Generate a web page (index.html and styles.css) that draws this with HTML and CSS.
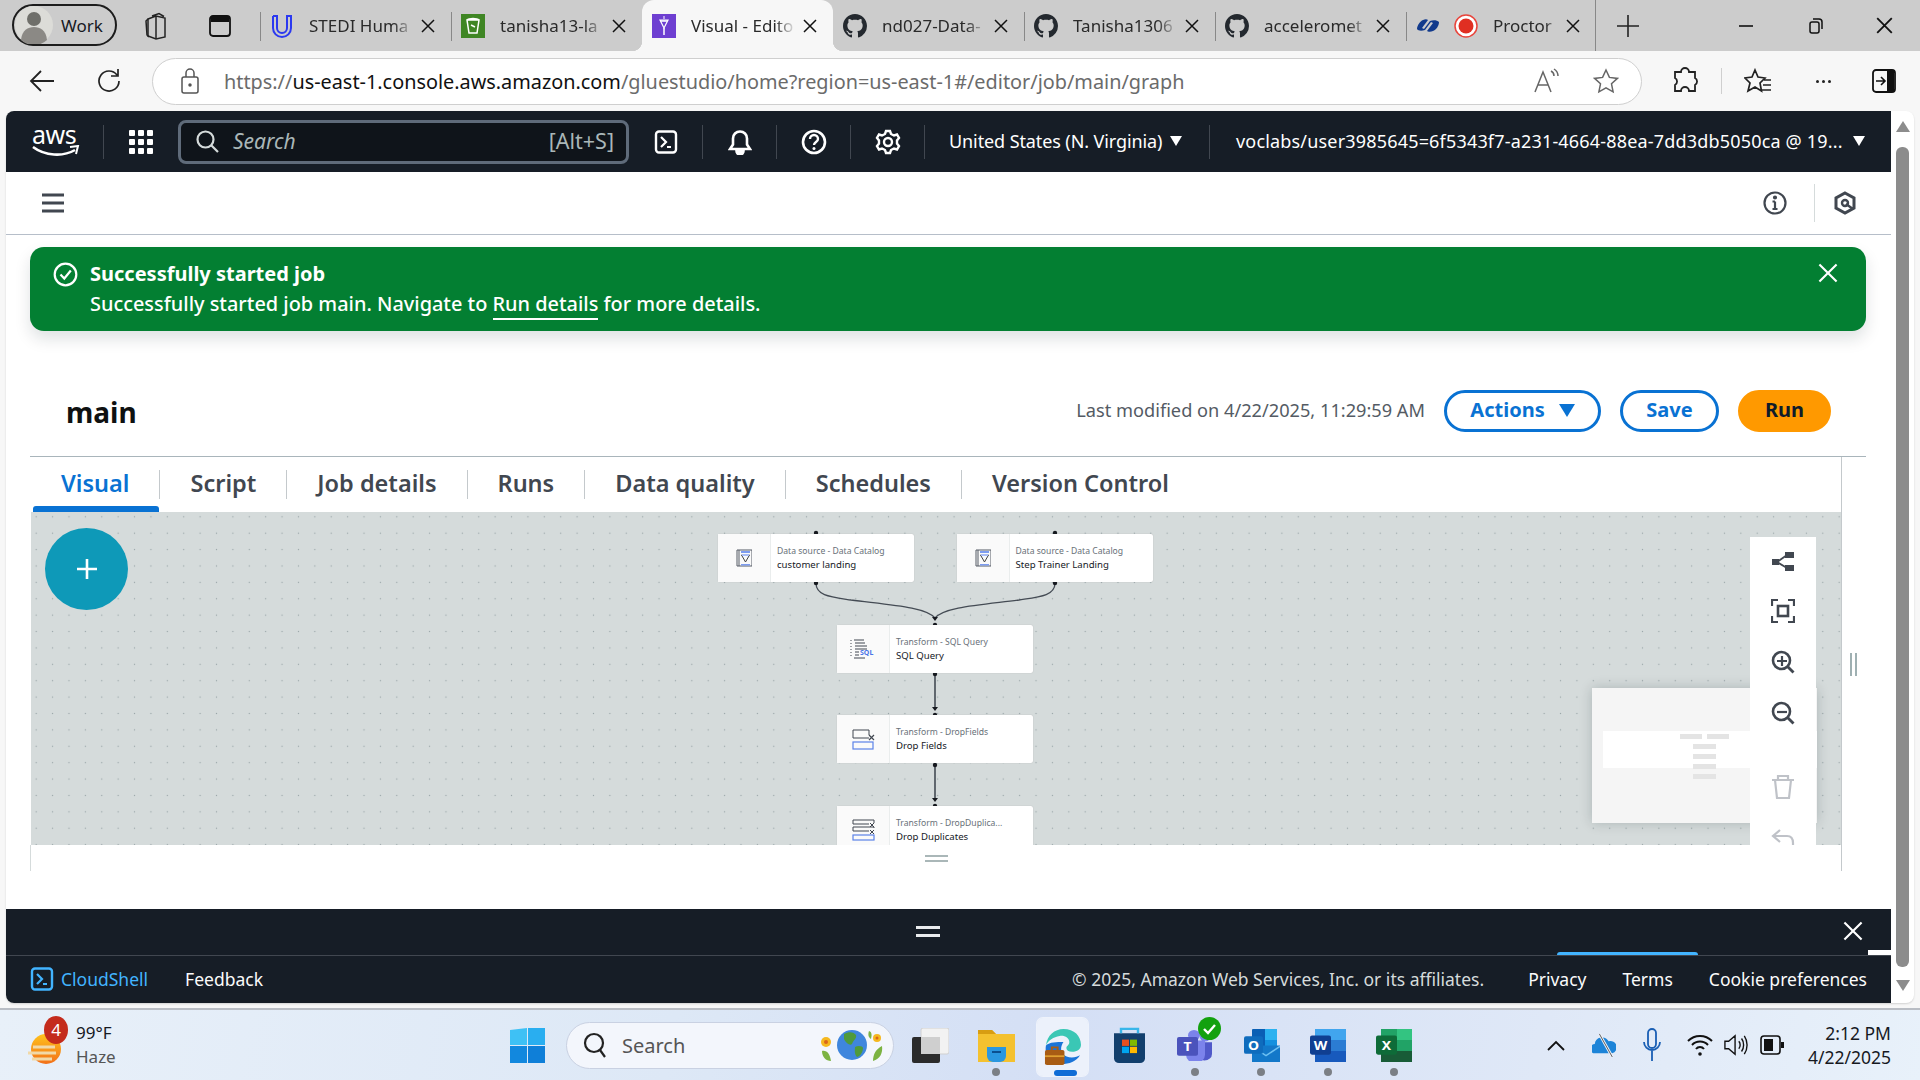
FILE: index.html
```html
<!DOCTYPE html>
<html lang="en">
<head>
    <meta charset="UTF-8">
    <title>Visual - Editor</title>
    <link rel="stylesheet" href="styles.css">
</head>
<body>
    <svg class="defs" width="0" height="0">
        <symbol id="x" viewBox="0 0 14 14"><path d="M1 1l12 12M13 1L1 13" fill="none" stroke="currentColor" stroke-width="1.5"/></symbol>
        <symbol id="github" viewBox="0 0 16 16"><path fill="#24292f" d="M8 0C3.58 0 0 3.58 0 8c0 3.54 2.29 6.53 5.47 7.59.4.07.55-.17.55-.38 0-.19-.01-.82-.01-1.49-2.01.37-2.53-.49-2.69-.94-.09-.23-.48-.94-.82-1.13-.28-.15-.68-.52-.01-.53.63-.01 1.08.58 1.23.82.72 1.21 1.87.87 2.33.66.07-.52.28-.87.51-1.07-1.78-.2-3.64-.89-3.64-3.95 0-.87.31-1.59.82-2.15-.08-.2-.36-1.02.08-2.12 0 0 .67-.21 2.2.82.64-.18 1.32-.27 2-.27.68 0 1.36.09 2 .27 1.53-1.04 2.2-.82 2.2-.82.44 1.1.16 1.92.08 2.12.51.56.82 1.27.82 2.15 0 3.07-1.87 3.75-3.65 3.95.29.25.54.73.54 1.48 0 1.07-.01 1.93-.01 2.2 0 .21.15.46.55.38A8.013 8.013 0 0016 8c0-4.42-3.58-8-8-8z"/></symbol>
        <symbol id="shell" viewBox="0 0 24 24"><rect x="2" y="1.5" width="20" height="21" rx="3" fill="none" stroke="currentColor" stroke-width="2.4"/><path d="M7 7l5 5-5 5M13 17h4" fill="none" stroke="currentColor" stroke-width="2.2"/></symbol>
        <symbol id="catalog" viewBox="0 0 16 18"><path d="M3 1H1v16h2M3 1v16M3 1h13v16H3" fill="none" stroke="#545b64" stroke-width="1"/><path d="M5 2h9v2H5zM5 15h9v1.5H5z" fill="#7d9cf0"/><path d="M5.500 6h8l-4 7z" fill="none" stroke="#444" stroke-width="1"/><path d="M6 5h7v2H6z" fill="#a9bdf5"/></symbol>
        <symbol id="zoomglass" viewBox="0 0 24 24"><circle cx="10.500" cy="10.500" r="8.500" fill="none" stroke="#414750" stroke-width="2.600"/><path d="M16.500 16.500l6 6" stroke="#414750" stroke-width="2.800"/></symbol>
    </svg>

    <div class="tabstrip">
        <div class="profile">
            <svg width="38" height="38" viewBox="0 0 38 38"><circle cx="19" cy="19" r="19" fill="#dcdcd8"/><circle cx="19" cy="13" r="7" fill="#6f6f6a"/><path d="M6 34c1-10 7-13 13-13s12 3 13 13a19 19 0 01-26 0z" fill="#8b8985"/></svg>
            <span>Work</span>
        </div>
        <div class="strip-btn">
            <svg width="26" height="28" viewBox="0 0 26 28" fill="none" stroke="#222" stroke-width="1.500"><path d="M8 4l7-2.500 5 3M4 7l8-3 9 2 0 19-9 2-8-3z"/><path d="M12 4v23"/><path d="M4 7L2 9l1 14 2 2"/></svg>
        </div>
        <div class="strip-btn strip-btn-list">
            <svg width="24" height="24" viewBox="0 0 24 24"><rect x="2" y="2" width="20" height="20" rx="3" fill="none" stroke="#111" stroke-width="1.800"/><path d="M3 3h18v5H3z" fill="#111"/></svg>
        </div>
        <div class="tab">
            <svg class="tab-icon" viewBox="0 0 24 24"><path d="M3 2v12a9 9 0 0018 0V2h-4v12a5 5 0 01-5 5" fill="none" stroke="#2b39f0" stroke-width="2"/><path d="M3 2h4v12a5 5 0 005 5" fill="none" stroke="#2b39f0" stroke-width="2"/></svg>
            <span class="tab-title">STEDI Huma</span>
            <svg class="tab-x"><use href="#x"/></svg>
        </div>
        <div class="tab">
            <svg class="tab-icon" viewBox="0 0 24 24"><rect width="24" height="24" fill="#3f8624"/><path d="M6 6h12l-2 13H8zM6 6c2-2 10-2 12 0" fill="none" stroke="#fff" stroke-width="1.500"/><path d="M10 11l4 2" stroke="#fff" stroke-width="1.500"/></svg>
            <span class="tab-title">tanisha13-la</span>
            <svg class="tab-x"><use href="#x"/></svg>
        </div>
        <div class="tab tab-active">
            <svg class="tab-icon" viewBox="0 0 24 24"><rect width="24" height="24" fill="#6e3fd1"/><path d="M8 6h8l-4 8z" fill="none" stroke="#fff" stroke-width="1.200"/><path d="M12 14v7M9 7h6" stroke="#fff" stroke-width="1.500"/><path d="M12 2v3" stroke="#fff"/></svg>
            <span class="tab-title">Visual - Edito</span>
            <svg class="tab-x"><use href="#x"/></svg>
        </div>
        <div class="tab">
            <svg class="tab-icon"><use href="#github"/></svg>
            <span class="tab-title">nd027-Data-</span>
            <svg class="tab-x"><use href="#x"/></svg>
        </div>
        <div class="tab">
            <svg class="tab-icon"><use href="#github"/></svg>
            <span class="tab-title">Tanisha1306</span>
            <svg class="tab-x"><use href="#x"/></svg>
        </div>
        <div class="tab">
            <svg class="tab-icon"><use href="#github"/></svg>
            <span class="tab-title">acceleromet</span>
            <svg class="tab-x"><use href="#x"/></svg>
        </div>
        <div class="tab tab-proctor">
            <svg class="tab-icon" viewBox="0 0 24 24"><path d="M1 15c0-3 3-8 6-9 2-1 4-1 5 0l-6 8 2 1 6-8c3-1 7-1 9 1 0 4-3 8-6 9-2 1-5 1-6 0l6-8-2-1-6 8c-3 1-7 1-8-1z" fill="#123a8c"/></svg>
            <svg class="tab-icon" viewBox="0 0 24 24"><circle cx="12" cy="12" r="11" fill="#fff" stroke="#e8453c" stroke-width="1.500"/><circle cx="12" cy="12" r="7.500" fill="#e02f22"/></svg>
            <span class="tab-title">Proctor</span>
            <svg class="tab-x"><use href="#x"/></svg>
        </div>
        <div class="new-tab">
            <svg width="24" height="24" viewBox="0 0 24 24"><path d="M12 1v22M1 12h22" stroke="#222" stroke-width="1.600"/></svg>
        </div>
        <div class="window-btns">
            <svg width="16" height="16" viewBox="0 0 16 16"><path d="M1 8h14" stroke="#111" stroke-width="1.600"/></svg>
            <svg width="16" height="18" viewBox="0 0 16 18" fill="none" stroke="#111" stroke-width="1.500"><rect x="2" y="5" width="9" height="11" rx="2"/><path d="M5 2h6a3 3 0 013 3v7"/></svg>
            <svg class="window-x"><use href="#x"/></svg>
        </div>
    </div>

    <div class="toolbar">
        <svg class="tool-back" width="26" height="24" viewBox="0 0 26 24" fill="none" stroke="#222" stroke-width="1.800"><path d="M25 12H2M12 2L2 12l10 10"/></svg>
        <svg class="tool-reload" width="24" height="26" viewBox="0 0 24 26" fill="none" stroke="#222" stroke-width="1.700"><path d="M20 7a10 10 0 102 6M21 1v7h-7"/></svg>
        <div class="address">
            <svg class="lock" width="18" height="26" viewBox="0 0 18 26" fill="none" stroke="#555" stroke-width="1.500"><rect x="1" y="9" width="16" height="16" rx="2"/><path d="M5 9V5a4 4 0 018 0v4"/><circle cx="9" cy="17" r="1" fill="#555"/></svg>
            <span class="url"><span class="url-dim">https://</span>us-east-1.console.aws.amazon.com<span class="url-dim">/gluestudio/home?region=us-east-1#/editor/job/main/graph</span></span>
            <svg class="read" width="28" height="26" viewBox="0 0 28 26" fill="none" stroke="#666" stroke-width="1.500"><path d="M2 24L10 4l8 20M5 17h10M18 3c2 1 3 3 3 5M21 1c3 2 4 4 4 7"/></svg>
            <svg class="star" width="26" height="26" viewBox="0 0 26 26" fill="none" stroke="#666" stroke-width="1.500"><path d="M13 2l3.400 7.400 8 1-5.900 5.400 1.600 8L13 19.900 5.900 23.800l1.600-8L1.600 10.400l8-1z"/></svg>
        </div>
        <svg class="tool-ext" width="26" height="28" viewBox="0 0 26 28" fill="none" stroke="#222" stroke-width="1.800"><path d="M9 5a4 4 0 018 0h6v6a4 4 0 010 7v6h-6a4 4 0 00-8 0H3v-6a4 4 0 000-7V5z"/></svg>
        <div class="tool-sep"></div>
        <svg class="tool-fav" width="28" height="26" viewBox="0 0 28 26" fill="none" stroke="#222" stroke-width="1.700"><path d="M11 2l3 7 7 1-5 5 1.500 8L11 19l-7 4 2-8-5-5 7-1zM20 12h7M19 17h8M18 22h9"/></svg>
        <div class="tool-dots"><i></i><i></i><i></i></div>
        <svg class="tool-side" width="24" height="24" viewBox="0 0 24 24"><rect x="1" y="1" width="22" height="22" rx="3" fill="none" stroke="#111" stroke-width="1.800"/><path d="M15 2h7v20h-7z" fill="#111"/><path d="M4 12h8M9 8l4 4-4 4" fill="none" stroke="#111" stroke-width="1.600"/></svg>
    </div>

    <div class="viewport">
        <div class="page">
            <div class="console">
                <header class="topnav">
                    <div class="nav-logo">
                        <div class="aws-logo">
                            <span>aws</span>
                            <svg width="48" height="13" viewBox="0 0 48 13"><path d="M1 2c12 9 30 10 42 3" fill="none" stroke="#fff" stroke-width="2.600"/><path d="M38 2l8-1-2 8" fill="none" stroke="#fff" stroke-width="2"/></svg>
                        </div>
                    </div>
                    <div class="nav-grid">
                        <svg width="24" height="24" viewBox="0 0 24 24" fill="#fff"><rect width="6" height="6" rx="1"/><rect x="9" width="6" height="6" rx="1"/><rect x="18" width="6" height="6" rx="1"/><rect y="9" width="6" height="6" rx="1"/><rect x="9" y="9" width="6" height="6" rx="1"/><rect x="18" y="9" width="6" height="6" rx="1"/><rect y="18" width="6" height="6" rx="1"/><rect x="9" y="18" width="6" height="6" rx="1"/><rect x="18" y="18" width="6" height="6" rx="1"/></svg>
                    </div>
                    <div class="nav-search">
                        <svg width="23" height="23" viewBox="0 0 23 23" fill="none" stroke="#d5dbdb" stroke-width="2.200"><circle cx="9.500" cy="9.500" r="8"/><path d="M15 15l7 7"/></svg>
                        <em>Search</em>
                        <span>[Alt+S]</span>
                    </div>
                    <div class="nav-cell nav-shell"><svg width="24" height="26"><use href="#shell"/></svg></div>
                    <div class="nav-cell">
                        <svg width="24" height="26" viewBox="0 0 24 26" fill="none" stroke="#fff" stroke-width="2.600"><path d="M12 2.500c-4 0-7 3-7 7v6l-3 4.500h20l-3-4.500v-6c0-4-3-7-7-7z"/><path d="M8.500 22a3.500 3.500 0 007 0z" fill="#fff"/></svg>
                    </div>
                    <div class="nav-cell">
                        <svg width="26" height="26" viewBox="0 0 26 26"><circle cx="13" cy="13" r="11" fill="none" stroke="#fff" stroke-width="2.600"/><path d="M9 10a4 4 0 118 0c0 3-4 3-4 6" fill="none" stroke="#fff" stroke-width="2.400"/><circle cx="13" cy="19.500" r="1.500" fill="#fff"/></svg>
                    </div>
                    <div class="nav-cell">
                        <svg width="26" height="26" viewBox="0 0 26 26" fill="none" stroke="#fff" stroke-width="2.400"><circle cx="13" cy="13" r="4"/><path d="M11 2h4l1 3 3 1.500 3-1 2 3.500-2 2.500v3l2 2.500-2 3.500-3-1L16 21l-1 3h-4l-1-3-3-1.500-3 1-2-3.500 2-2.500v-3l-2-2.500 2-3.500 3 1L10 5z"/></svg>
                    </div>
                    <div class="nav-region"><span>United States (N. Virginia)</span><b class="nav-caret"></b></div>
                    <div class="nav-user"><span>voclabs/user3985645=6f5343f7-a231-4664-88ea-7dd3db5050ca @ 19...</span><b class="nav-caret"></b></div>
                </header>

                <div class="subnav">
                    <svg width="22" height="20" viewBox="0 0 22 20"><path d="M0 2h22M0 10h22M0 18h22" stroke="#414750" stroke-width="3"/></svg>
                    <div class="subnav-right">
                        <div class="subnav-cell subnav-info">
                            <svg width="24" height="24" viewBox="0 0 24 24" fill="none" stroke="#414750" stroke-width="2.200"><circle cx="12" cy="12" r="10.500"/><path d="M12 10.500V18M9.500 18h5M9.500 10.500H12"/><circle cx="12" cy="6.500" r="1" fill="#414750"/></svg>
                        </div>
                        <div class="subnav-cell">
                            <svg width="22" height="24" viewBox="0 0 22 24" fill="none" stroke="#414750" stroke-width="3"><path d="M11 2l9 5v10l-9 5-9-5V7z"/><circle cx="11" cy="12" r="3" stroke-width="2.400"/><path d="M12 13l7 5" stroke-width="2.400"/></svg>
                        </div>
                    </div>
                </div>

                <div class="flash">
                    <svg class="flash-icon" width="25" height="25" viewBox="0 0 25 25" fill="none" stroke="#fff" stroke-width="2.200"><circle cx="12.500" cy="12.500" r="10.800"/><path d="M7.500 12.500l3.800 4 6.500-8"/></svg>
                    <div class="flash-text">
                        <div class="flash-title">Successfully started job</div>
                        <div>Successfully started job main. Navigate to <a class="flash-link">Run details</a> for more details.</div>
                    </div>
                    <svg class="flash-x"><use href="#x"/></svg>
                </div>

                <section class="job">
                    <div class="job-head">
                        <h1>main</h1>
                        <span class="modified">Last modified on 4/22/2025, 11:29:59 AM</span>
                        <button class="btn btn-actions">Actions<b class="btn-caret"></b></button>
                        <button class="btn btn-save">Save</button>
                        <button class="btn btn-run">Run</button>
                    </div>
                    <div class="editor">
                        <div class="editor-main">
                            <div class="tabs">
                                <div class="jtab jtab-active">Visual</div>
                                <div class="jtab">Script</div>
                                <div class="jtab">Job details</div>
                                <div class="jtab">Runs</div>
                                <div class="jtab">Data quality</div>
                                <div class="jtab">Schedules</div>
                                <div class="jtab jtab-last">Version Control</div>
                            </div>
                            <div class="canvas">
                                <svg class="wires" width="1810" height="333" viewBox="0 0 1810 333">
                                    <g fill="none" stroke="#444b54" stroke-width="1.300">
                                        <path d="M785 71C785 84 800 85 820 88C860 93 895 95 904 106"/>
                                        <path d="M1024 71C1024 84 1008 85 988 88C948 93 913 95 904 106"/>
                                        <path d="M904 162V197M904 253V288" stroke-width="1.600"/>
                                    </g>
                                    <g fill="#16191f">
                                        <circle cx="785" cy="21" r="2.200"/><circle cx="1024" cy="21" r="2.200"/>
                                        <circle cx="785" cy="71" r="2.200"/><circle cx="1024" cy="71" r="2.200"/>
                                        <circle cx="904" cy="162" r="2.200"/><circle cx="904" cy="253" r="2.200"/>
                                        <circle cx="904" cy="113" r="2.200"/><circle cx="904" cy="203" r="2.200"/><circle cx="904" cy="294" r="2.200"/>
                                        <path d="M901 105h6l-3 4zM901 195h6l-3 4zM901 286h6l-3 4z"/>
                                    </g>
                                </svg>

                                <div class="node node-a">
                                    <div class="node-icon"><svg width="16" height="18"><use href="#catalog"/></svg></div>
                                    <div class="node-text"><small>Data source - Data Catalog</small><span>customer landing</span></div>
                                </div>
                                <div class="node node-b">
                                    <div class="node-icon"><svg width="16" height="18"><use href="#catalog"/></svg></div>
                                    <div class="node-text"><small>Data source - Data Catalog</small><span>Step Trainer Landing</span></div>
                                </div>
                                <div class="node node-c">
                                    <div class="node-icon">
                                        <svg width="26" height="20" viewBox="0 0 26 20"><path d="M4 1h10M5 4h10M5 7h12M5 10h12M5 13h4M5 16h4M4 19h11" stroke="#414750" stroke-width="1" fill="none"/><path d="M1 1v18" stroke="#414750" stroke-width="1" stroke-dasharray="1 2"/><text x="10" y="16" class="sql-text">SQL</text></svg>
                                    </div>
                                    <div class="node-text"><small>Transform - SQL Query</small><span>SQL Query</span></div>
                                </div>
                                <div class="node node-d">
                                    <div class="node-icon">
                                        <svg width="23" height="21" viewBox="0 0 23 21" fill="none"><path d="M17 9H1V1h16v5" stroke="#414750"/><path d="M17 6l5 5M22 6l-5 5" stroke="#414750" stroke-width="1.200"/><rect x="1" y="13" width="20" height="7" stroke="#5b82e8" stroke-width="1.200"/></svg>
                                    </div>
                                    <div class="node-text"><small>Transform - DropFields</small><span>Drop Fields</span></div>
                                </div>
                                <div class="node node-e">
                                    <div class="node-icon">
                                        <svg width="23" height="22" viewBox="0 0 23 22" fill="none"><path d="M1 1h21v3M1 1v4h16M1 8h21v1M1 8v4h16" stroke="#414750"/><path d="M18 4l4 4M22 4l-4 4M18 11l4 4M22 11l-4 4" stroke="#414750"/><rect x="1" y="16" width="21" height="5" stroke="#5b82e8" stroke-width="1.200"/></svg>
                                    </div>
                                    <div class="node-text"><small>Transform - DropDuplica...</small><span>Drop Duplicates</span></div>
                                </div>

                                <button class="add-node">
                                    <svg width="24" height="24" viewBox="0 0 24 24"><path d="M12 2v20M2 12h20" stroke="#fff" stroke-width="2.600"/></svg>
                                </button>

                                <div class="minimap">
                                    <div class="minimap-view"></div>
                                    <i class="mm mm-a"></i><i class="mm mm-b"></i><i class="mm mm-c"></i><i class="mm mm-d"></i><i class="mm mm-e"></i><i class="mm mm-f"></i>
                                </div>

                                <div class="tools">
                                    <svg width="22" height="20" viewBox="0 0 22 20" fill="#414750"><path d="M0 7h7v6H0zM13 0h9v6h-9zM13 13h9v6h-9z"/><path d="M5 10l10-7M5 10l10 6" stroke="#414750" stroke-width="1.800"/></svg>
                                    <svg width="24" height="24" viewBox="0 0 24 24" fill="none" stroke="#414750" stroke-width="2.200"><path d="M1 7V1h6M17 1h6v6M23 17v6h-6M7 23H1v-6"/><rect x="7" y="7" width="10" height="10" stroke-width="2.600"/></svg>
                                    <div class="tool-zoom">
                                        <svg width="24" height="24"><use href="#zoomglass"/></svg>
                                        <svg class="tool-zoom-mark" width="12" height="12" viewBox="0 0 12 12"><path d="M1 6h10M6 1v10" stroke="#414750" stroke-width="2.200"/></svg>
                                    </div>
                                    <div class="tool-zoom">
                                        <svg width="24" height="24"><use href="#zoomglass"/></svg>
                                        <svg class="tool-zoom-mark" width="12" height="12" viewBox="0 0 12 12"><path d="M1 6h10" stroke="#414750" stroke-width="2.200"/></svg>
                                    </div>
                                    <svg class="tool-trash" width="22" height="24" viewBox="0 0 22 24" fill="none" stroke="#bfc2c8" stroke-width="2.200"><path d="M0 5h22M6 5V1h10v4M3 5l2 18h12l2-18"/></svg>
                                    <svg class="tool-undo" width="24" height="20" viewBox="0 0 24 20" fill="none" stroke="#bfc2c8" stroke-width="2.200"><path d="M9 1L2 7l7 6M2 7h14c4 0 6 3 6 7v5"/></svg>
                                </div>
                            </div>
                            <div class="resize-y"><i></i></div>
                        </div>
                        <div class="resize-x"><i></i></div>
                    </div>
                </section>

                <div class="shell-panel">
                    <div class="shell-bar">
                        <div class="shell-grip"></div>
                        <svg class="shell-x"><use href="#x"/></svg>
                        <div class="shell-arc"></div>
                        <div class="shell-tick"></div>
                    </div>
                    <footer class="footer">
                        <svg class="footer-shell" width="24" height="24"><use href="#shell"/></svg>
                        <span class="footer-cs">CloudShell</span>
                        <span class="footer-fb">Feedback</span>
                        <span class="footer-copy">© 2025, Amazon Web Services, Inc. or its affiliates.</span>
                        <span class="footer-link">Privacy</span>
                        <span class="footer-link">Terms</span>
                        <span class="footer-link">Cookie preferences</span>
                    </footer>
                </div>
            </div>
            <div class="scrollbar">
                <b class="sb-up"></b>
                <div class="sb-thumb"></div>
                <b class="sb-down"></b>
            </div>
        </div>
    </div>

    <div class="taskbar">
        <div class="weather">
            <div class="weather-icon">
                <svg width="34" height="42" viewBox="0 0 34 42"><defs><linearGradient id="sun" x1="0" y1="0" x2="0" y2="1"><stop offset="0" stop-color="#ffc21c"/><stop offset="1" stop-color="#f2701a"/></linearGradient></defs><circle cx="19" cy="23" r="15" fill="url(#sun)"/><path d="M6 21h22M1 27h28M5 33h20" stroke="#f1d9a8" stroke-width="3"/></svg>
                <span class="weather-badge">4</span>
            </div>
            <div class="weather-text"><div>99°F</div><div class="weather-sub">Haze</div></div>
        </div>
        <svg class="start" width="35" height="35" viewBox="0 0 35 35"><path d="M0 2l17-2v17H0z" fill="#3ec1f5"/><path d="M18 0l17 0v17H18z" fill="#29aef0"/><path d="M0 18h17v17H0z" fill="#1288de"/><path d="M18 18h17v17H18z" fill="#0f7fd8"/></svg>
        <div class="tb-search">
            <svg width="24" height="26" viewBox="0 0 24 26" fill="none" stroke="#222" stroke-width="2.200"><circle cx="11" cy="11" r="9"/><path d="M17 18l5 7"/></svg>
            <span>Search</span>
            <svg class="tb-globe" width="66" height="36" viewBox="0 0 66 36"><circle cx="33" cy="18" r="15" fill="#3f86dd"/><path d="M25 7c5-3 10-2 12 1 1 4-3 5-4 9-2 2-6-1-8-5zM36 20c3-2 8-1 8 1 0 5-4 9-6 9-3-3-2-7-2-10z" fill="#4f9a3c"/><circle cx="7" cy="15" r="5" fill="#f5b81f"/><circle cx="7" cy="15" r="2" fill="#d9661a"/><circle cx="58" cy="11" r="4" fill="#f5b81f"/><circle cx="58" cy="11" r="1.500" fill="#d9661a"/><path d="M3 24c5-1 8 3 9 10-5 0-9-4-9-10zM63 19c1 7-2 13-9 15 0-7 3-12 9-15zM50 4c3 1 3 4 2 8-3-2-3-5-2-8z" fill="#7cb342"/></svg>
        </div>
        <div class="app">
            <svg width="37" height="35" viewBox="0 0 37 35"><rect x="9" y="0" width="28" height="26" rx="2" fill="#f2f2f2" stroke="#d0d0d0"/><rect x="0" y="9" width="28" height="26" rx="2" fill="#2b2b2b"/><rect x="9" y="9" width="19" height="17" fill="#cfcfcf"/></svg>
        </div>
        <div class="app app-running">
            <svg width="37" height="33" viewBox="0 0 37 33"><path d="M0 1h14l4 4h19v28H0z" fill="#f4c12f"/><path d="M0 1h14l4 4H0z" fill="#d89d12"/><path d="M9 18h19v9a6 6 0 01-6 6h-7a6 6 0 01-6-6z" fill="#2a97e0"/><path d="M14 23h9" stroke="#0b4f8f" stroke-width="2"/></svg>
        </div>
        <div class="app app-active">
            <svg width="37" height="37" viewBox="0 0 38 42" preserveAspectRatio="none"><path d="M2 20C3 8 11 1 20 1c11 0 18 8 18 18 0 5-4 8-9 8-4 0-6-2-6-4 0-3 3-3 3-7 0-5-5-8-10-7C10 10 4 14 2 20z" fill="#3ac7b5"/><path d="M2 20c-2 12 6 20 16 21 8 0 15-3 19-10-4 3-14 4-18-2-2-4-2-8 1-13-7 0-14 0-18 4z" fill="#1a74d8"/><rect x="1" y="25" width="20" height="17" rx="2" fill="#a85c14"/><path d="M1 32h20" stroke="#e0a030" stroke-width="2"/><path d="M8 25v-3h6v3" fill="none" stroke="#a85c14" stroke-width="2"/></svg>
            <i class="app-bar"></i>
        </div>
        <div class="app">
            <svg width="35" height="36" viewBox="0 0 35 40" preserveAspectRatio="none"><path d="M2 7h31v28a5 5 0 01-5 5H7a5 5 0 01-5-5z" fill="#123f6d"/><path d="M9 7V2h17v5" fill="none" stroke="#38b6ea" stroke-width="2.400"/><rect x="10" y="14" width="7" height="7" fill="#e8501f"/><rect x="18" y="14" width="7" height="7" fill="#7fba00"/><rect x="10" y="22" width="7" height="7" fill="#00a4ef"/><rect x="18" y="22" width="7" height="7" fill="#ffb900"/></svg>
        </div>
        <div class="app app-running">
            <div class="teams">
                <svg width="36" height="32" viewBox="0 0 36 36" preserveAspectRatio="none"><circle cx="28" cy="9" r="5" fill="#7b83eb"/><path d="M20 15h15v13a7 7 0 01-15 0z" fill="#5059c9"/><circle cx="17" cy="7" r="6" fill="#7b83eb"/><path d="M9 13h19v16a9 9 0 01-19 0z" fill="#7b83eb"/><rect x="0" y="9" width="21" height="21" rx="2" fill="#4b53bc"/><text x="10.500" y="25" class="app-letter">T</text></svg>
                <svg class="teams-check" width="23" height="23" viewBox="0 0 23 23"><circle cx="11.500" cy="11.500" r="11.500" fill="#13a10e"/><path d="M6 12l4 4 7-8" fill="none" stroke="#fff" stroke-width="2.400"/></svg>
            </div>
        </div>
        <div class="app app-running">
            <svg width="36" height="33" viewBox="0 0 36 36" preserveAspectRatio="none"><rect x="8" y="0" width="25" height="24" rx="1" fill="#0a5fb4"/><rect x="21" y="0" width="12" height="12" fill="#2cb2f0"/><rect x="21" y="12" width="12" height="12" fill="#1490df"/><path d="M8 18h28v18H8z" fill="#1378c9"/><path d="M8 18l14 10 14-10v2L22 30 8 20z" fill="#6fc1f2"/><rect x="0" y="8" width="19" height="19" rx="2" fill="#0f6cbd"/><text x="9.500" y="23" class="app-letter">O</text></svg>
        </div>
        <div class="app app-running">
            <svg width="36" height="33" viewBox="0 0 36 36" preserveAspectRatio="none"><rect x="5" y="0" width="31" height="12" fill="#41a5ee"/><rect x="5" y="12" width="31" height="12" fill="#2b7cd3"/><rect x="5" y="24" width="31" height="12" fill="#185abd"/><rect x="0" y="7" width="21" height="21" rx="2" fill="#103f91"/><text x="10.500" y="23" class="app-letter">W</text></svg>
        </div>
        <div class="app app-running">
            <svg width="36" height="33" viewBox="0 0 36 36" preserveAspectRatio="none"><rect x="5" y="0" width="16" height="12" fill="#21a366"/><rect x="21" y="0" width="15" height="12" fill="#33c481"/><rect x="5" y="12" width="16" height="12" fill="#107c41"/><rect x="21" y="12" width="15" height="12" fill="#21a366"/><rect x="5" y="24" width="31" height="12" fill="#185c37"/><rect x="0" y="7" width="21" height="21" rx="2" fill="#0e6b38"/><text x="10.500" y="23" class="app-letter">X</text></svg>
        </div>
        <div class="tray">
            <svg width="18" height="11" viewBox="0 0 18 11"><path d="M1 10l8-8 8 8" fill="none" stroke="#111" stroke-width="1.800"/></svg>
            <svg class="tray-cloud" width="24" height="28" viewBox="0 0 26 30"><path d="M3 24a5 5 0 010-10 8 8 0 0115-3 6 6 0 014 13z" fill="#1d84d8"/><path d="M8 3l14 25" stroke="#eef2fa" stroke-width="3"/><path d="M8 3l14 25" stroke="#555" stroke-width="1"/></svg>
            <svg class="tray-mic" width="18" height="34" viewBox="0 0 18 34" fill="none" stroke="#1a5fb4" stroke-width="1.800"><rect x="5" y="1" width="8" height="19" rx="4"/><path d="M1 14a8 8 0 0016 0M9 23v10"/></svg>
            <svg class="tray-wifi" width="26" height="24" viewBox="0 0 26 24" fill="none" stroke="#111" stroke-width="2"><path d="M1 8a17 17 0 0124 0M5 12a11 11 0 0116 0M9 16a5 5 0 018 0"/><circle cx="13" cy="21" r="1.800" fill="#111" stroke="none"/></svg>
            <svg class="tray-vol" width="24" height="24" viewBox="0 0 26 26" fill="none" stroke="#111" stroke-width="1.500"><path d="M1 9h4l7-6v20l-7-6H1zM16 9c2 2 2 6 0 8M19 6c3 4 3 10 0 14M22 3c4 6 4 14 0 20"/></svg>
            <svg class="tray-batt" width="24" height="20" viewBox="0 0 24 20"><rect x="1" y="1" width="19" height="18" rx="3" fill="none" stroke="#111" stroke-width="1.600"/><rect x="4" y="4" width="9" height="12" fill="#111"/><rect x="21" y="7" width="3" height="6" fill="#111"/></svg>
            <div class="clock"><div>2:12 PM</div><div>4/22/2025</div></div>
        </div>
    </div>
</body>
</html>
```

FILE: styles.css
```css
html, body {
    margin: 0;
    padding: 0;
}
body {
    width: 1920px;
    height: 1080px;
    overflow: hidden;
    display: flex;
    flex-direction: column;
    background-color: #f7f7f7;
    font-family: 'Noto Sans', 'Open Sans', sans-serif;
    color: #16191f;
}
svg {
    display: block;
    flex-shrink: 0;
}
.defs {
    position: absolute;
}

/* browser tabs */
.tabstrip {
    height: 51px;
    flex-shrink: 0;
    display: flex;
    background-color: #cccccc;
    font-size: 17px;
}
.profile {
    width: 105px;
    height: 42px;
    margin: 4px 0 0 12px;
    box-sizing: border-box;
    border: 2px solid #1c1c1c;
    border-radius: 21px;
    display: flex;
    align-items: center;
    gap: 8px;
    padding-left: 1px;
}
.strip-btn {
    width: 62px;
    display: flex;
    align-items: center;
    justify-content: center;
    margin-left: 9px;
}
.strip-btn-list {
    margin-left: -9px;
    width: 81px;
}
.tab {
    width: 191px;
    height: 51px;
    box-sizing: border-box;
    display: flex;
    align-items: center;
    padding-left: 10px;
    position: relative;
    color: #2a2a2a;
}
.tab::before {
    content: '';
    position: absolute;
    left: 0;
    top: 12px;
    height: 29px;
    width: 1px;
    background-color: #888;
}
.tab-active {
    background-color: #f7f7f7;
    border-radius: 12px 12px 0 0;
}
.tab-active::before,
.tab-active::after {
    content: '';
    position: absolute;
    top: auto;
    bottom: 0;
    width: 10px;
    height: 10px;
    background-color: transparent;
}
.tab-active::before {
    left: -10px;
    background-image: radial-gradient(circle at 0 0, transparent 10px, #f7f7f7 10.5px);
}
.tab-active::after {
    right: -10px;
    background-image: radial-gradient(circle at 100% 0, transparent 10px, #f7f7f7 10.5px);
}
.tab-active + .tab::before {
    display: none;
}
.tab-icon {
    width: 24px;
    height: 24px;
    margin-right: 15px;
}
.tab-title {
    width: 105px;
    white-space: nowrap;
    -webkit-mask-image: linear-gradient(to right, #000 80%, transparent 100%);
    mask-image: linear-gradient(to right, #000 80%, transparent 100%);
}
.tab-x {
    width: 14px;
    height: 14px;
    margin-left: 7px;
    color: #111;
}
.tab-proctor .tab-icon:first-child {
    margin-right: 14px;
}
.tab-proctor .tab-title {
    width: 66px;
}
.tab-proctor {
    border-right: 1px solid #888;
    width: 190px;
}
.new-tab {
    width: 64px;
    display: flex;
    align-items: center;
    justify-content: center;
}
.window-btns {
    display: flex;
    align-items: center;
    margin-left: 78px;
    gap: 54px;
}
.window-x {
    width: 17px;
    height: 17px;
    color: #111;
    margin-left: -2px;
}

/* browser toolbar */
.toolbar {
    height: 60px;
    flex-shrink: 0;
    display: flex;
    align-items: center;
    padding-left: 29px;
}
.tool-reload {
    margin-left: 42px;
}
.address {
    width: 1490px;
    height: 47px;
    margin-left: 31px;
    box-sizing: border-box;
    border: 1px solid #cfcfcf;
    border-radius: 24px;
    background-color: #fff;
    display: flex;
    align-items: center;
    padding-left: 28px;
}
.url {
    margin-left: 25px;
    width: 1309px;
    font-size: 19.850px;
    white-space: nowrap;
    color: #111;
}
.url-dim {
    color: #6b6b6b;
}
.star {
    margin-left: 32px;
}
.tool-ext {
    margin-left: 30px;
}
.tool-sep {
    width: 1px;
    height: 26px;
    background-color: #cfcfcf;
    margin-left: 23px;
}
.tool-fav {
    margin-left: 22px;
}
.tool-dots {
    display: flex;
    gap: 3px;
    margin-left: 44px;
}
.tool-dots i {
    width: 3px;
    height: 3px;
    border-radius: 50%;
    background-color: #222;
}
.tool-side {
    margin-left: 41px;
}

/* page frame */
.viewport {
    height: 897px;
    flex-shrink: 0;
    padding: 0 6px;
}
.page {
    height: 892px;
    display: flex;
    background-color: #fff;
    border-radius: 8px;
    box-shadow: 0 1px 2px rgba(0, 0, 0, 0.15);
}
.console {
    width: 1885px;
    display: flex;
    flex-direction: column;
}
.scrollbar {
    width: 23px;
    position: relative;
}
.sb-thumb {
    position: absolute;
    left: 5px;
    top: 36px;
    width: 13px;
    height: 820px;
    background-color: #8c8c8c;
    border-radius: 6px;
}
.sb-up, .sb-down {
    position: absolute;
    left: 5px;
    width: 0;
    height: 0;
    border-left: 7px solid transparent;
    border-right: 7px solid transparent;
}
.sb-up {
    top: 10px;
    border-bottom: 11px solid #8c8c8c;
}
.sb-down {
    top: 869px;
    border-top: 11px solid #8c8c8c;
}

/* aws top nav */
.topnav {
    height: 61px;
    flex-shrink: 0;
    display: flex;
    align-items: center;
    background-color: #161d26;
    border-radius: 8px 0 0 0;
    color: #fff;
    font-size: 18px;
}
.nav-logo {
    width: 98px;
    height: 34px;
    box-sizing: border-box;
    border-right: 1px solid #414750;
    padding-left: 26px;
}
.aws-logo {
    width: 48px;
    height: 34px;
}
.aws-logo span {
    display: block;
    font-size: 25px;
    line-height: 24px;
    letter-spacing: -0.5px;
    margin-top: -3px;
}
.aws-logo svg {
    margin-top: -1px;
}
.nav-grid {
    width: 74px;
    display: flex;
    justify-content: center;
}
.nav-search {
    width: 451px;
    height: 44px;
    box-sizing: border-box;
    border: 3px solid #5f6b7a;
    border-radius: 8px;
    background-color: #0f141a;
    display: flex;
    align-items: center;
    padding: 0 12px 0 15px;
    color: #aab7b8;
    font-size: 21px;
    line-height: 28px;
}
.nav-search em {
    margin-left: 14px;
    flex: 1;
    margin-top: -2px;
}
.nav-search span {
    margin-top: -2px;
    font-size: 21.500px;
}
.nav-cell {
    width: 74px;
    height: 34px;
    box-sizing: border-box;
    border-right: 1px solid #414750;
    display: flex;
    align-items: center;
    justify-content: center;
}
.nav-region {
    width: 285px;
    height: 34px;
    box-sizing: border-box;
    border-right: 1px solid #414750;
    display: flex;
    align-items: center;
    padding: 0 0 2px 24px;
    white-space: nowrap;
    letter-spacing: -0.100px;
}
.nav-region .nav-caret {
    margin-left: 8px;
}
.nav-user {
    display: flex;
    align-items: center;
    padding: 0 0 2px 26px;
    white-space: nowrap;
    letter-spacing: 0.180px;
}
.nav-caret {
    width: 0;
    height: 0;
    margin-left: 10px;
    border-left: 6px solid transparent;
    border-right: 6px solid transparent;
    border-top: 10px solid #fff;
}

/* sub nav */
.subnav {
    height: 62px;
    flex-shrink: 0;
    border-bottom: 1px solid #b6bec9;
    display: flex;
    align-items: center;
    padding-left: 36px;
}
.subnav-right {
    margin-left: auto;
    display: flex;
    align-items: center;
    margin-right: 16px;
}
.subnav-cell {
    width: 60px;
    height: 38px;
    display: flex;
    align-items: center;
    justify-content: center;
}
.subnav-info {
    width: 70px;
    box-sizing: border-box;
    padding-right: 9px;
    border-right: 1px solid #d5dbdb;
}

/* success flash */
.flash {
    flex-shrink: 0;
    height: 84px;
    margin: 12px 25px 0 24px;
    box-sizing: border-box;
    background-color: #037f32;
    border-radius: 14px;
    box-shadow: 0 8px 16px rgba(0, 28, 36, 0.13);
    display: flex;
    color: #fff;
    font-size: 19.900px;
    font-weight: 500;
    line-height: 30px;
    padding: 12px 28px 0 23px;
}
.flash-icon {
    margin-top: 3px;
}
.flash-text {
    margin-left: 12px;
    flex: 1;
}
.flash-title {
    font-weight: 700;
    font-size: 20px;
}
.flash-link {
    border-bottom: 2px solid #fff;
    padding-bottom: 1px;
}
.flash-x {
    width: 20px;
    height: 20px;
    margin-top: 4px;
}

/* job area */
.job {
    flex: 1;
    margin: 0 25px 0 24px;
}
.job-head {
    height: 42px;
    margin-top: 59px;
    margin-bottom: 24px;
    display: flex;
    align-items: center;
}
.job-head h1 {
    margin: 2px auto 0 36px;
    font-size: 28px;
    font-weight: 700;
    color: #0f1111;
}
.modified {
    font-size: 18.200px;
    color: #545b64;
    margin-right: 19px;
    margin-top: -3px;
}
.btn {
    height: 42px;
    box-sizing: border-box;
    border: 3px solid #0972d3;
    border-radius: 21px;
    background-color: #fff;
    color: #0972d3;
    font-family: inherit;
    font-size: 20px;
    font-weight: 700;
    line-height: 26px;
    padding: 0 0 2px;
    display: flex;
    align-items: center;
    justify-content: center;
}
.btn-actions {
    width: 157px;
}
.btn-caret {
    width: 0;
    height: 0;
    margin-left: 14px;
    border-left: 8px solid transparent;
    border-right: 8px solid transparent;
    border-top: 13px solid #0972d3;
}
.btn-save {
    width: 99px;
    margin-left: 19px;
}
.btn-run {
    width: 93px;
    margin-left: 19px;
    margin-right: 35px;
    background-color: #ff9900;
    border-color: #ff9900;
    color: #0f1b2a;
}
.editor {
    height: 414px;
    display: flex;
    border-top: 1px solid #a9b5bb;
}
.editor-main {
    width: 1812px;
    box-sizing: border-box;
    border-right: 1px solid #c4c9cc;
    display: flex;
    flex-direction: column;
}
.tabs {
    height: 55px;
    flex-shrink: 0;
    display: flex;
    padding: 13px 0 0 1px;
    box-sizing: border-box;
    font-size: 23.500px;
    font-weight: 600;
    color: #414750;
}
.jtab {
    height: 29px;
    padding: 0 30px;
    line-height: 26px;
    border-right: 1px solid #c4c9cc;
    position: relative;
    white-space: nowrap;
}
.jtab-last {
    border-right: none;
}
.jtab-active {
    color: #0972d3;
}
.jtab-active::after {
    content: '';
    position: absolute;
    left: 2px;
    right: 0;
    top: 36px;
    height: 6px;
    border-radius: 3px 3px 0 0;
    background-color: #0972d3;
}

/* canvas with the graph on it */
.canvas {
    height: 333px;
    flex-shrink: 0;
    position: relative;
    overflow: hidden;
    margin-left: 1px;
    background-color: #d5dbdb;
    background-image: radial-gradient(circle, #99a5a8 0.7px, transparent 1px);
    background-size: 16.4px 16.4px;
    background-position: -3px 13px;
}
.wires {
    position: absolute;
    left: 0;
    top: 0;
}
.node {
    position: absolute;
    width: 196px;
    height: 48px;
    display: flex;
    background-color: #fff;
    border-radius: 2px;
    box-shadow: 0 0 1px rgba(0, 0, 0, 0.25);
}
.node-a { left: 687px; top: 22px; }
.node-b { left: 925.500px; top: 22px; }
.node-c { left: 806px; top: 113px; }
.node-d { left: 806px; top: 203px; }
.node-e { left: 806px; top: 294px; }
.node-icon {
    width: 52px;
    flex-shrink: 0;
    display: flex;
    align-items: center;
    justify-content: center;
    background-color: #fafafa;
    border-right: 1px solid #eaeded;
}
.node-text {
    padding: 11px 0 0 6px;
    display: flex;
    flex-direction: column;
    white-space: nowrap;
}
.node-text small {
    font-size: 8.600px;
    line-height: 13px;
    color: #687078;
}
.node-text span {
    font-size: 9.600px;
    line-height: 14px;
}
.sql-text {
    font-size: 7px;
    font-weight: 700;
    fill: #4a76e8;
}
.add-node {
    position: absolute;
    left: 14px;
    top: 16px;
    width: 83px;
    height: 82px;
    border: none;
    border-radius: 50%;
    padding: 0;
    background-color: #0e99b8;
    display: flex;
    align-items: center;
    justify-content: center;
}
.minimap {
    position: absolute;
    left: 1561px;
    top: 176px;
    width: 225px;
    height: 135px;
    background-color: #f5f5f5;
    box-shadow: 0 0 12px rgba(0, 28, 36, 0.2);
}
.minimap-view {
    position: absolute;
    left: 11px;
    top: 43px;
    width: 214px;
    height: 37px;
    background-color: #fff;
}
.mm {
    position: absolute;
    height: 5px;
    background-color: #e4e4e4;
}
.mm-a { left: 88px; top: 46px; width: 22px; }
.mm-b { left: 115px; top: 46px; width: 22px; }
.mm-c { left: 101px; top: 56px; width: 23px; }
.mm-d { left: 101px; top: 66px; width: 23px; }
.mm-e { left: 101px; top: 76px; width: 23px; }
.mm-f { left: 101px; top: 86px; width: 23px; }
.tools {
    position: absolute;
    left: 1719px;
    top: 25px;
    width: 66px;
    height: 320px;
    background-color: #fff;
    display: flex;
    flex-direction: column;
    align-items: center;
    padding-top: 15px;
    gap: 27px;
    box-sizing: border-box;
}
.tool-zoom {
    width: 24px;
    height: 24px;
    position: relative;
}
.tool-zoom-mark {
    position: absolute;
    left: 4.500px;
    top: 4.500px;
}
.tool-trash {
    margin-top: 23px;
}
.tool-undo {
    margin-top: 3px;
}
.resize-y {
    flex: 1;
    border-left: 1px solid #d5dbdb;
    display: flex;
    justify-content: center;
    padding-top: 10px;
    box-sizing: border-box;
}
.resize-y i {
    width: 23px;
    height: 7px;
    box-sizing: border-box;
    border-top: 2px solid #aab7b8;
    border-bottom: 2px solid #aab7b8;
}
.resize-x {
    flex: 1;
    display: flex;
    align-items: center;
    padding-left: 8px;
}
.resize-x i {
    width: 7px;
    height: 23px;
    box-sizing: border-box;
    border-left: 2px solid #9fb0b2;
    border-right: 2px solid #9fb0b2;
}

/* cloudshell panel */
.shell-panel {
    height: 94px;
    flex-shrink: 0;
    margin-top: auto;
    background-color: #161d26;
    border-radius: 0 0 0 8px;
    color: #fff;
}
.shell-bar {
    height: 47px;
    box-sizing: border-box;
    border-bottom: 1px solid #414750;
    position: relative;
}
.shell-grip {
    position: absolute;
    left: 910px;
    top: 17px;
    width: 24px;
    height: 11px;
    box-sizing: border-box;
    border-top: 3px solid #e9ebed;
    border-bottom: 3px solid #e9ebed;
}
.shell-x {
    position: absolute;
    left: 1837px;
    top: 12px;
    width: 20px;
    height: 20px;
}
.shell-arc {
    position: absolute;
    left: 1551px;
    bottom: 0;
    width: 141px;
    height: 3px;
    background-color: #42b4ff;
    border-radius: 6px 6px 0 0;
}
.shell-tick {
    position: absolute;
    right: 0;
    bottom: 0;
    width: 23px;
    height: 5px;
    background-color: #fff;
}
.footer {
    height: 46px;
    display: flex;
    align-items: center;
    padding-left: 24px;
    font-size: 17.500px;
    color: #fbfbfb;
}
.footer-shell {
    color: #42b4ff;
}
.footer-cs {
    margin-left: 7px;
    color: #42b4ff;
}
.footer-fb {
    margin-left: 37px;
}
.footer-copy {
    margin-left: auto;
    margin-right: 44px;
    color: #d5dbdb;
}
.footer-link {
    margin-right: 36px;
}
.footer-link:last-child {
    margin-right: 24px;
}

/* windows taskbar */
.taskbar {
    flex: 1;
    box-sizing: border-box;
    border-top: 2px solid #b9bdc4;
    padding-bottom: 4px;
    background: linear-gradient(100deg, #e8f0f9 0%, #dde8f6 35%, #d4dff5 55%, #dfe8f7 80%, #e8f1fa 100%);
    display: flex;
    align-items: center;
    font-size: 17px;
}
.weather {
    width: 510px;
    flex-shrink: 0;
    display: flex;
    padding-left: 27px;
    box-sizing: border-box;
    align-items: center;
}
.weather-icon {
    position: relative;
    width: 34px;
    height: 42px;
    margin-top: 4px;
}
.weather-badge {
    position: absolute;
    left: 17px;
    top: -10px;
    width: 24px;
    height: 28px;
    border-radius: 50%;
    background-color: #c42b1c;
    color: #fff;
    font-size: 17px;
    line-height: 28px;
    text-align: center;
}
.weather-text {
    margin-left: 15px;
    line-height: 24px;
}
.weather-sub {
    color: #555;
}
.start {
    margin-right: 21px;
}
.tb-search {
    width: 328px;
    height: 47px;
    flex-shrink: 0;
    box-sizing: border-box;
    border: 1px solid #c9d1e2;
    border-radius: 24px;
    background-color: #f3f6fc;
    display: flex;
    align-items: center;
    padding-left: 16px;
    margin-right: 3px;
    font-size: 20px;
    color: #555;
}
.tb-search span {
    margin-left: 15px;
}
.tb-globe {
    margin-left: auto;
    margin-right: 8px;
}
.app {
    width: 66.300px;
    height: 70px;
    flex-shrink: 0;
    display: flex;
    justify-content: center;
    align-items: center;
    position: relative;
    box-sizing: border-box;
}
.app-running::after {
    content: '';
    position: absolute;
    left: 29px;
    bottom: 4px;
    width: 8px;
    height: 8px;
    border-radius: 50%;
    background-color: #7b7f85;
}
.app-active {
    background-color: rgba(255, 255, 255, 0.55);
    box-shadow: 0 0 0 1px rgba(255, 255, 255, 0.6);
    border-radius: 6px;
    width: 51px;
    height: 58px;
    margin: 3px 7.650px 0;
    padding-bottom: 1px;
}
.app-bar {
    position: absolute;
    left: 17px;
    bottom: 0;
    width: 23px;
    height: 6px;
    border-radius: 3px;
    background-color: #0f6cd6;
}
.teams {
    position: relative;
    width: 44px;
    height: 32px;
    margin-left: 7px;
}
.teams-check {
    position: absolute;
    right: 0;
    top: -12px;
}
.app-letter {
    font-size: 14px;
    font-weight: 700;
    fill: #fff;
    text-anchor: middle;
}
.tray {
    margin-left: auto;
    padding-right: 29px;
    display: flex;
    align-items: center;
    font-size: 17.500px;
}
.tray-cloud { margin-left: 27px; }
.tray-mic { margin-left: 27px; }
.tray-wifi { margin-left: 26px; }
.tray-vol { margin-left: 11px; }
.tray-batt { margin-left: 12px; }
.clock {
    margin-left: 24px;
    text-align: right;
    line-height: 24px;
}
```
